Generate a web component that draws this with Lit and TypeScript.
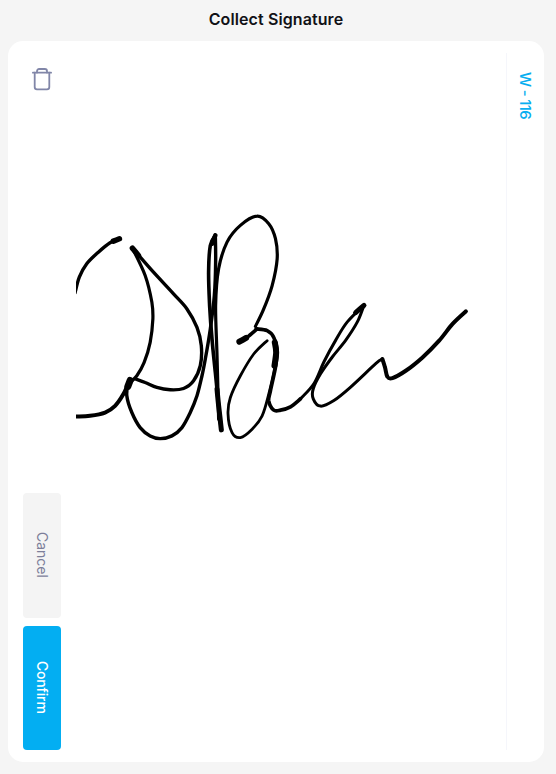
import { LitElement, html, css, svg } from "lit";
import { customElement } from "lit/decorators.js";

type Pt = [number, number];

/* Signature points are traced in 3x crops of the reference, then moved to page space. */
const frame = (x0: number, y0: number) => (p: Pt[]): Pt[] => p.map(([x, y]) => [x0 + x / 3, y0 + y / 3]);
const a = frame(70, 205);
const b = frame(225, 290);
const l = frame(300, 298);
const k = frame(225, 320);

const smooth = (p: Pt[]): string => {
  let d = `M${p[0][0].toFixed(1)} ${p[0][1].toFixed(1)}`;
  for (let i = 0; i < p.length - 1; i++) {
    const p0 = p[Math.max(i - 1, 0)];
    const p1 = p[i];
    const p2 = p[i + 1];
    const p3 = p[Math.min(i + 2, p.length - 1)];
    const c1x = p1[0] + (p2[0] - p0[0]) / 6;
    const c1y = p1[1] + (p2[1] - p0[1]) / 6;
    const c2x = p2[0] - (p3[0] - p1[0]) / 6;
    const c2y = p2[1] - (p3[1] - p1[1]) / 6;
    d += ` C${c1x.toFixed(1)} ${c1y.toFixed(1)} ${c2x.toFixed(1)} ${c2y.toFixed(1)} ${p2[0].toFixed(1)} ${p2[1].toFixed(1)}`;
  }
  return d;
};

const STROKES: { w: number; pts: Pt[] }[] = [
  { w: 3.4, pts: a([[150, 100], [120, 112], [85, 140], [50, 175], [28, 215], [15, 262]]) },
  { w: 5.5, pts: a([[148, 100], [130, 107]]) },
  { w: 4, pts: a([[5, 632], [20, 632], [60, 630], [105, 620], [135, 600], [160, 565], [178, 525]]) },
  { w: 3.4, pts: a([[174, 530], [170, 570], [185, 620], [210, 665], [240, 690], [270, 698], [305, 690], [335, 665], [360, 620], [380, 570], [395, 510], [405, 460], [420, 370], [432, 270], [436, 170], [435, 90]]) },
  { w: 3.6, pts: a([[435, 90], [420, 120], [415, 200], [418, 300], [425, 400], [435, 500], [445, 600], [453, 672]]) },
  { w: 5, pts: a([[440, 550], [445, 600], [453, 672]]) },
  { w: 4.5, pts: a([[435, 90], [425, 115]]) },
  { w: 3.4, pts: a([[187, 128], [250, 200], [310, 265], [350, 310], [380, 365], [393, 420], [390, 480], [370, 525], [340, 548], [300, 552], [260, 545], [225, 530], [195, 519]]) },
  { w: 3.2, pts: a([[187, 128], [225, 210], [245, 290], [248, 340], [240, 410], [222, 470], [200, 510], [175, 535]]) },
  { w: 5.5, pts: a([[187, 128], [205, 150]]) },
  { w: 7, pts: a([[180, 524], [173, 542]]) },
  { w: 3.2, pts: a([[445, 640], [440, 450], [436, 300], [445, 190], [470, 110], [510, 60], [560, 32], [595, 55], [615, 100], [620, 160], [605, 240], [580, 310], [555, 362]]) },
  { w: 3.6, pts: k([[40, 65], [65, 50], [95, 25]]) },
  { w: 6, pts: k([[42, 63], [62, 52]]) },
  { w: 3.6, pts: k([[92, 25], [125, 30], [145, 50], [155, 90], [150, 140], [135, 210], [130, 240], [145, 268], [165, 268], [195, 258], [225, 234]]) },
  { w: 2.8, pts: k([[125, 60], [85, 100], [45, 165], [15, 230], [8, 280], [20, 335], [45, 350], [80, 325], [110, 285], [130, 220], [150, 130], [155, 90]]) },
  { w: 6, pts: k([[148, 65], [152, 95], [147, 135]]) },
  { w: 3, pts: l([[0, 300], [40, 255], [70, 190], [105, 125], [140, 70], [190, 20]]) },
  { w: 3, pts: l([[190, 20], [170, 70], [135, 125], [95, 175], [60, 225], [38, 270], [38, 300], [60, 322], [100, 305], [150, 265], [225, 195], [245, 181]]) },
  { w: 5, pts: l([[190, 20], [165, 42]]) },
  { w: 4, pts: b([[470, 205], [478, 230], [485, 258], [500, 262], [540, 240], [590, 200], [640, 150], [680, 100], [720, 62]]) },
];

@customElement("app-root")
export class AppRoot extends LitElement {
  static styles = css`
    :host {
      display: flex;
      flex-direction: column;
      width: 556px;
      height: 774px;
      box-sizing: border-box;
      background: #f5f5f5;
      padding: 0 12px 12px 8px;
      font-family: "Inter", "Liberation Sans", sans-serif;
    }
    .title {
      height: 41px;
      padding-bottom: 3px;
      box-sizing: border-box;
      display: flex;
      align-items: center;
      justify-content: center;
      font-size: 16px;
      font-weight: 600;
      letter-spacing: 0.1px;
      color: #111116;
    }
    .card {
      flex: 1;
      min-height: 0;
      display: flex;
      background: #ffffff;
      border-radius: 15px;
      padding: 12px 0;
    }
    .tools {
      width: 68px;
      flex: none;
      display: flex;
      flex-direction: column;
      box-sizing: border-box;
      padding-left: 15px;
    }
    .trash {
      width: 20px;
      height: 24px;
      margin: 14px 0 0 9px;
      color: #8186a8;
    }
    .actions {
      margin-top: auto;
      display: flex;
      flex-direction: column;
      gap: 8px;
    }
    .btn {
      width: 38px;
      height: 124.5px;
      border: none;
      border-radius: 4px;
      padding: 0;
      display: flex;
      align-items: center;
      justify-content: center;
      font: inherit;
      font-size: 14px;
      font-weight: 500;
      writing-mode: vertical-rl;
    }
    .cancel {
      background: #f4f4f4;
      color: #7d7f9a;
      font-weight: 400;
    }
    .confirm {
      background: #03aef2;
      color: #ffffff;
      letter-spacing: -0.2px;
    }
    .pad {
      flex: 1;
      min-width: 0;
      overflow: hidden;
    }
    .pad svg {
      display: block;
      width: 100%;
      height: 100%;
    }
    .side {
      width: 38px;
      flex: none;
      box-sizing: border-box;
      border-left: 1px solid #f5f6fb;
      padding: 19px 1px 0 0;
      display: flex;
      justify-content: center;
    }
    .label {
      writing-mode: vertical-rl;
      font-size: 15px;
      font-weight: 500;
      letter-spacing: -0.7px;
      color: #08aef0;
      white-space: nowrap;
    }
  `;

  render() {
    return html`
      <div class="title">Collect Signature</div>
      <div class="card">
        <div class="tools">
          <svg class="trash" viewBox="0 0 20 24" fill="none" stroke="currentColor" stroke-width="1.8" stroke-linejoin="round" stroke-linecap="round">
            <path d="M0.9 5.7H19.1" />
            <path d="M5 5.5V4.2C5 2.9 5.9 2 7.2 2H12.8C14.1 2 15 2.9 15 4.2V5.5" />
            <path d="M2.7 5.7V20C2.7 21.4 3.6 22.3 5 22.3H15C16.4 22.3 17.3 21.4 17.3 20V5.7" />
          </svg>
          <div class="actions">
            <button class="btn cancel">Cancel</button>
            <button class="btn confirm">Confirm</button>
          </div>
        </div>
        <div class="pad">
          <svg viewBox="76 53 429 697" preserveAspectRatio="xMinYMin slice" fill="none" stroke="#000" stroke-linecap="round" stroke-linejoin="round">
            ${STROKES.map((s) => svg`<path d=${smooth(s.pts)} stroke-width=${s.w} />`)}
          </svg>
        </div>
        <div class="side"><span class="label">W - 116</span></div>
      </div>
    `;
  }
}
